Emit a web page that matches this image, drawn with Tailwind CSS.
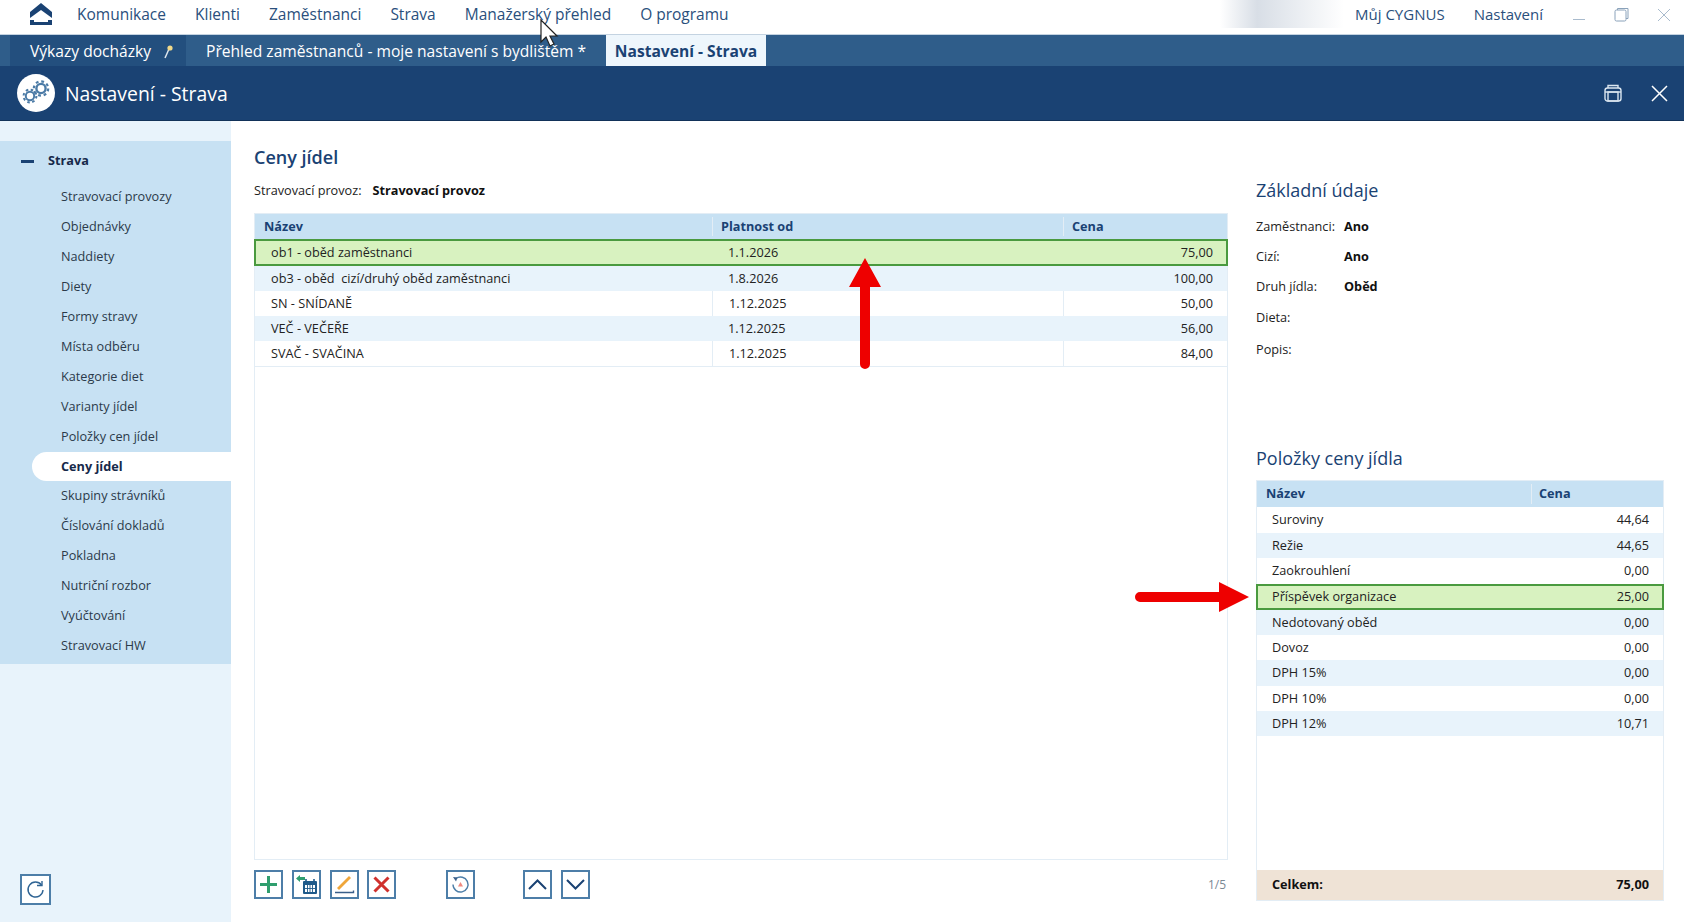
<!DOCTYPE html>
<html lang="cs">
<head>
  <meta charset="UTF-8" />
  <title>Nastavení - Strava</title>
  <script src="https://cdn.jsdelivr.net/npm/@tailwindcss/browser@4"></script>
</head>
<body class="bg-white font-['Open_Sans',sans-serif] text-[12.7px] text-[#222]">
<div class="relative w-[1684px] h-[922px] overflow-hidden flex flex-col">

  <!-- top menu -->
  <header class="h-[34px] flex items-center bg-white text-[15.5px] text-[#2a4f7c]">
    <svg class="ml-[29px] w-[24px] h-[22px] mb-[7px]" viewBox="0 0 24 22"><path d="M12 0 L23 9 L23 15 L12 7 L1 15 L1 9 Z M1 17 L5 17 L5 19 L19 19 L19 17 L23 17 L23 22 L1 22 Z" fill="#1a4273"/></svg>
    <nav class="ml-[24px] flex gap-[29px] mb-[5px]">
      <span>Komunikace</span><span>Klienti</span><span>Zaměstnanci</span><span>Strava</span><span>Manažerský přehled</span><span>O programu</span>
    </nav>
    <div class="ml-auto w-[124px] h-[28px] mb-[6px] bg-gradient-to-r from-white via-[#d8dee6] via-30% to-white"></div>
    <span class="ml-[11px] mb-[5px] text-[15px]">Můj CYGNUS</span>
    <span class="ml-[29px] mb-[5px] text-[15px]">Nastavení</span>
    <div class="w-[12px] h-px bg-[#a9bbcd] ml-[30px] mb-[-5px]"></div>
    <svg class="ml-[29px] mb-[5px] w-[15px] h-[15px]" viewBox="0 0 15 15" fill="none" stroke="#8aa2ba"><rect x="1" y="3" width="11" height="11" rx="1.5"/><path d="M3.5 3V1.5H14V11.5H12"/></svg>
    <svg class="ml-[28px] mr-[13px] mb-[5px] w-[14px] h-[14px]" viewBox="0 0 14 14" stroke="#a9bbcd"><path d="M1 1L13 13M13 1L1 13"/></svg>
  </header>

  <!-- tabs -->
  <div class="h-[32px] flex items-start bg-[#2f5d8a] border-t border-[#c4d3e1] text-[15.6px] text-white">
    <div class="ml-[10px] w-[176px] h-[31px] pt-[2px] flex items-center pl-[20px] bg-[#234f7e]">
      Výkazy docházky
      <svg class="ml-[11px] w-[12px] h-[15px]" viewBox="0 0 12 15" fill="none"><path d="M3 14L7 5" stroke="#dfe7ee" stroke-width="1.5"/><circle cx="8" cy="4" r="2.6" fill="#f1d98a"/></svg>
    </div>
    <div class="h-[31px] pt-[2px] flex items-center pl-[20px] w-[420px]">Přehled zaměstnanců - moje nastavení s bydlištěm *</div>
    <div class="w-[160px] h-[31px] pt-[2px] flex items-center justify-center bg-[#eef6fc] font-bold text-[#1a4273]">Nastavení - Strava</div>
  </div>

  <!-- title bar -->
  <div class="h-[55px] flex items-center bg-[#1a4273] border-b border-[#123259] text-white">
    <div class="ml-[17px] w-[38px] h-[38px] rounded-full bg-white flex items-center justify-center">
      <svg class="w-[30px] h-[26px]" viewBox="0 0 30 26" fill="none" stroke="#4c7ba6"><circle cx="9" cy="16" r="4.2" stroke-width="2"/><circle cx="9" cy="16" r="6.4" stroke-dasharray="2.51 2.51" stroke-width="2"/><circle cx="20" cy="8.5" r="4.6" stroke-width="2.4"/><circle cx="20" cy="8.5" r="7.2" stroke-dasharray="2.83 2.83" stroke-width="2.2"/></svg>
    </div>
    <span class="ml-[10px] text-[19.4px] translate-y-px">Nastavení - Strava</span>
    <svg class="ml-auto w-[18px] h-[19px]" viewBox="0 0 18 19" fill="none" stroke="#dbe6f0" stroke-width="1.4"><path d="M4 4V1.5H14V4"/><rect x="1" y="4" width="16" height="13" rx="2.5"/><path d="M1 8H17"/><rect x="4" y="8" width="10" height="9"/></svg>
    <svg class="ml-[29px] mr-[16px] w-[17px] h-[17px]" viewBox="0 0 17 17" stroke="#fff" stroke-width="1.5"><path d="M1 1L16 16M16 1L1 16"/></svg>
  </div>

  <div class="flex-1 flex min-h-0">
    <!-- sidebar -->
    <aside class="w-[231px] flex flex-col bg-[#e8f3fb]">
      <div class="h-[20px]"></div>
      <div class="h-[523px] bg-[#c7e1f3]">
        <div class="h-[40px] flex items-center font-bold text-[#16294a]">
          <span class="ml-[21px] w-[13px] h-[3px] bg-[#1a4273]"></span>
          <span class="ml-[14px]">Strava</span>
        </div>
        <ul class="mt-[1px] text-[#2b3a4a]">
          <li class="h-[30px] flex items-center pl-[61px]">Stravovací provozy</li>
          <li class="h-[30px] flex items-center pl-[61px]">Objednávky</li>
          <li class="h-[30px] flex items-center pl-[61px]">Naddiety</li>
          <li class="h-[30px] flex items-center pl-[61px]">Diety</li>
          <li class="h-[30px] flex items-center pl-[61px]">Formy stravy</li>
          <li class="h-[30px] flex items-center pl-[61px]">Místa odběru</li>
          <li class="h-[30px] flex items-center pl-[61px]">Kategorie diet</li>
          <li class="h-[30px] flex items-center pl-[61px]">Varianty jídel</li>
          <li class="h-[30px] flex items-center pl-[61px]">Položky cen jídel</li>
          <li class="h-[29px] flex items-center pl-[29px] ml-[32px] bg-white rounded-l-full font-bold text-[#16294a]">Ceny jídel</li>
          <li class="h-[30px] flex items-center pl-[61px]">Skupiny strávníků</li>
          <li class="h-[30px] flex items-center pl-[61px]">Číslování dokladů</li>
          <li class="h-[30px] flex items-center pl-[61px]">Pokladna</li>
          <li class="h-[30px] flex items-center pl-[61px]">Nutriční rozbor</li>
          <li class="h-[30px] flex items-center pl-[61px]">Vyúčtování</li>
          <li class="h-[30px] flex items-center pl-[61px]">Stravovací HW</li>
        </ul>
      </div>
      <div class="mt-auto mb-[17px] ml-[20px] w-[31px] h-[31px] border-2 border-[#4d7ea8] bg-white flex items-center justify-center">
        <svg class="w-[19px] h-[19px]" viewBox="0 0 19 19" fill="none" stroke="#2f6494" stroke-width="1.4"><path d="M15.5 5A7.5 7.5 0 1 0 17 10"/><path d="M11 5.5H16V1"/></svg>
      </div>
    </aside>

    <!-- main list -->
    <main class="w-[997px] pl-[23px] flex flex-col">
      <h2 class="mt-[22px] h-[28px] flex items-center text-[18px] font-semibold text-[#1a4273]">Ceny jídel</h2>
      <p class="mt-[10px] h-[20px] flex items-center">Stravovací provoz:<b class="ml-[11px] text-[#111]">Stravovací provoz</b></p>
      <div class="mt-[12px] w-[974px] h-[647px] border border-[#e3edf5] flex flex-col">
        <div class="h-[25px] flex items-center bg-[#c7e1f3] font-bold text-[#1a4273]">
          <span class="w-[457px] pl-[9px]">Název</span><span class="w-[351px] pl-[8px] border-l border-[#e3edf5]">Platnost od</span><span class="flex-1 pl-[8px] border-l border-[#e3edf5]">Cena</span>
        </div>
        <div class="h-[27px] flex items-center bg-[#d8f2c0] border-2 border-[#4a9a3f] -mx-px">
          <span class="w-[456px] pl-[15px]">ob1 - oběd zaměstnanci</span><span class="w-[351px] pl-[16px]">1.1.2026</span><span class="flex-1 text-right pr-[13px]">75,00</span>
        </div>
        <div class="h-[25px] flex items-center bg-[#e8f3fb]">
          <span class="w-[457px] pl-[16px]">ob3 - oběd&nbsp; cizí/druhý oběd zaměstnanci</span><span class="w-[351px] pl-[16px]">1.8.2026</span><span class="flex-1 text-right pr-[14px]">100,00</span>
        </div>
        <div class="h-[25px] flex items-center bg-white">
          <span class="w-[457px] pl-[16px] h-full flex items-center">SN - SNÍDANĚ</span><span class="w-[351px] pl-[16px] h-full flex items-center border-l border-[#e3edf5]">1.12.2025</span><span class="flex-1 text-right pr-[14px] h-full leading-[25px] border-l border-[#e3edf5]">50,00</span>
        </div>
        <div class="h-[25px] flex items-center bg-[#e8f3fb]">
          <span class="w-[457px] pl-[16px]">VEČ - VEČEŘE</span><span class="w-[351px] pl-[16px]">1.12.2025</span><span class="flex-1 text-right pr-[14px]">56,00</span>
        </div>
        <div class="h-[26px] flex items-center bg-white border-b border-[#e3edf5]">
          <span class="w-[457px] pl-[16px] h-full flex items-center">SVAČ - SVAČINA</span><span class="w-[351px] pl-[16px] h-full flex items-center border-l border-[#e3edf5]">1.12.2025</span><span class="flex-1 text-right pr-[14px] h-full leading-[25px] border-l border-[#e3edf5]">84,00</span>
        </div>
      </div>
      <!-- toolbar -->
      <div class="mt-[10px] w-[974px] flex items-center">
        <button class="w-[29px] h-[29px] border-2 border-[#4d7ea8] bg-white flex items-center justify-center"><svg class="w-[19px] h-[19px]" viewBox="0 0 19 19" stroke="#2f9e6e" stroke-width="3"><path d="M9.5 1V18M1 9.5H18"/></svg></button>
        <button class="ml-[9px] w-[29px] h-[29px] border-2 border-[#4d7ea8] bg-white flex items-center justify-center"><svg class="w-[23px] h-[21px]" viewBox="0 0 23 21"><path d="M1 4.5L5 1V3H10V6H5V8Z" fill="#2f9e6e"/><rect x="8" y="7" width="14" height="13" rx="1" fill="#1f5a8a"/><path d="M11 5V8M19 5V8" stroke="#1f5a8a" stroke-width="1.6"/><path d="M10 11H20V18H10Z" fill="#fff"/><path d="M15 11V18M10 14.5H20M12.5 11V18M17.5 11V18" stroke="#1f5a8a" stroke-width="0.9"/></svg></button>
        <button class="ml-[9px] w-[29px] h-[29px] border-2 border-[#4d7ea8] bg-white flex items-center justify-center"><svg class="w-[21px] h-[21px]" viewBox="0 0 21 21" fill="none"><path d="M3 14L15 2L17 4L5 16Z" fill="#efa63a"/><path d="M1 18.5H19.5V16.5" stroke="#3a5f8a" stroke-width="1.4"/></svg></button>
        <button class="ml-[8px] w-[29px] h-[29px] border-2 border-[#4d7ea8] bg-white flex items-center justify-center"><svg class="w-[17px] h-[17px]" viewBox="0 0 17 17" stroke="#d0312d" stroke-width="3"><path d="M1.5 1.5L15.5 15.5M15.5 1.5L1.5 15.5"/></svg></button>
        <button class="ml-[50px] w-[29px] h-[29px] border-2 border-[#4d7ea8] bg-white flex items-center justify-center"><svg class="w-[19px] h-[19px]" viewBox="0 0 19 19" fill="none"><path d="M5 3.5A7.5 7.5 0 1 1 2 9.5" stroke="#4d7ea8" stroke-width="1.4"/><path d="M2 2L6.5 2.5L5 6.5Z" fill="#3a5f8a"/><path d="M9.5 7L12 11.5H7Z" fill="#ef8a80"/></svg></button>
        <button class="ml-[48px] w-[29px] h-[29px] border-2 border-[#4d7ea8] bg-white flex items-center justify-center"><svg class="w-[19px] h-[11px]" viewBox="0 0 19 11" fill="none" stroke="#1a4273" stroke-width="2"><path d="M1 10L9.5 1.5L18 10"/></svg></button>
        <button class="ml-[9px] w-[29px] h-[29px] border-2 border-[#4d7ea8] bg-white flex items-center justify-center"><svg class="w-[19px] h-[11px]" viewBox="0 0 19 11" fill="none" stroke="#1a4273" stroke-width="2"><path d="M1 1L9.5 9.5L18 1"/></svg></button>
        <span class="ml-auto pr-[2px] text-[12px] text-[#7b8894]">1/5</span>
      </div>
    </main>

    <!-- detail -->
    <section class="flex-1 pl-[28px] pr-[20px] flex flex-col">
      <h3 class="mt-[55px] h-[28px] flex items-center text-[18px] text-[#1a4273]">Základní údaje</h3>
      <div class="mt-[8px] grid grid-cols-[88px_1fr] auto-rows-[30px] items-center">
        <span>Zaměstnanci:</span><b class="text-[#111]">Ano</b>
        <span>Cizí:</span><b class="text-[#111]">Ano</b>
        <span>Druh jídla:</span><b class="text-[#111]">Oběd</b>
        <span class="translate-y-[1px]">Dieta:</span><span></span>
        <span class="translate-y-[3px]">Popis:</span><span></span>
      </div>
      <h3 class="mt-[82px] h-[28px] flex items-center text-[18px] text-[#1a4273]">Položky ceny jídla</h3>
      <div class="mt-[8px] h-[421px] border border-[#e3edf5] flex flex-col">
        <div class="h-[26px] flex items-center bg-[#c7e1f3] font-bold text-[#1a4273]">
          <span class="w-[274px] pl-[9px]">Název</span><span class="flex-1 pl-[7px] border-l border-[#e3edf5]">Cena</span>
        </div>
        <div class="h-[26px] flex items-center justify-between pl-[15px] pr-[14px]"><span>Suroviny</span><span>44,64</span></div>
        <div class="h-[25px] flex items-center justify-between pl-[15px] pr-[14px] bg-[#e8f3fb]"><span>Režie</span><span>44,65</span></div>
        <div class="h-[26px] flex items-center justify-between pl-[15px] pr-[14px]"><span>Zaokrouhlení</span><span>0,00</span></div>
        <div class="h-[26px] -mx-px flex items-center justify-between pl-[14px] pr-[13px] bg-[#d8f2c0] border-2 border-[#4a9a3f]"><span>Příspěvek organizace</span><span>25,00</span></div>
        <div class="h-[25px] flex items-center justify-between pl-[15px] pr-[14px] bg-[#e8f3fb]"><span>Nedotovaný oběd</span><span>0,00</span></div>
        <div class="h-[25px] flex items-center justify-between pl-[15px] pr-[14px]"><span>Dovoz</span><span>0,00</span></div>
        <div class="h-[26px] flex items-center justify-between pl-[15px] pr-[14px] bg-[#e8f3fb]"><span>DPH 15%</span><span>0,00</span></div>
        <div class="h-[25px] flex items-center justify-between pl-[15px] pr-[14px]"><span>DPH 10%</span><span>0,00</span></div>
        <div class="h-[25px] flex items-center justify-between pl-[15px] pr-[14px] bg-[#e8f3fb]"><span>DPH 12%</span><span>10,71</span></div>
        <div class="mt-auto h-[30px] flex items-center justify-between pl-[15px] pr-[14px] bg-[#efe3d6] font-bold text-[#111]"><span>Celkem:</span><span>75,00</span></div>
      </div>
    </section>
  </div>

  <!-- annotations -->
  <svg class="absolute left-[847px] top-[256px] w-[36px] h-[114px]" viewBox="0 0 36 114"><path d="M18 2L34 31H23V108A5 5 0 0 1 13 108V31H2Z" fill="#ee0000"/></svg>
  <svg class="absolute left-[1134px] top-[582px] w-[116px] h-[30px]" viewBox="0 0 116 30"><path d="M115 15L85 0V10H6A5 5 0 0 0 6 20H85V30Z" fill="#ee0000"/></svg>
  <svg class="absolute left-[540px] top-[19px] w-[20px] h-[29px]" viewBox="0 0 20 29"><path d="M1 1V23L6 18L10 27L14 25L10 17H17Z" fill="#fff" stroke="#222" stroke-width="1.2"/></svg>
</div>
</body>
</html>
